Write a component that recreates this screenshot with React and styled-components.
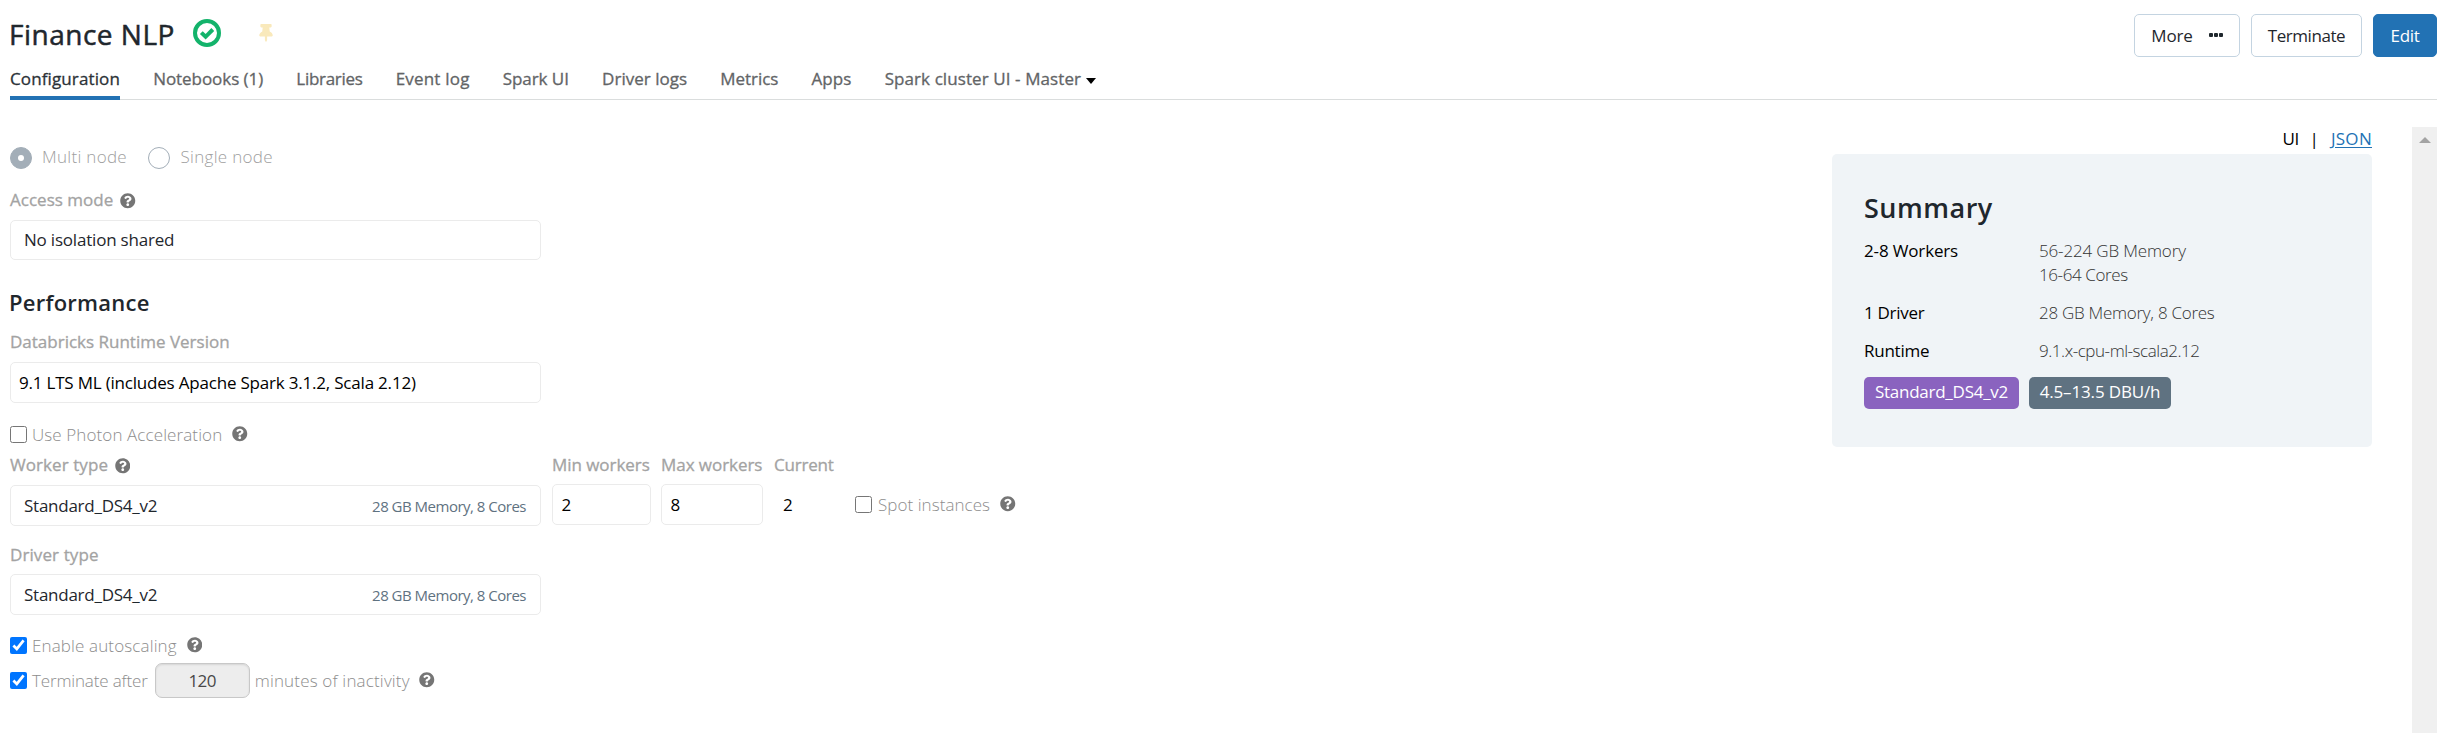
import React from "react";
import styled, { createGlobalStyle, css } from "styled-components";
import { FaQuestionCircle, FaThumbtack } from "react-icons/fa";

const GlobalStyle = createGlobalStyle`
  *, *::before, *::after { box-sizing: border-box; }
  body { margin: 0; background: #fff; overflow: hidden; }
`;

const Page = styled.div`
  height: 733px;
  padding: 14px 11px 0 10px;
  display: flex;
  flex-direction: column;
  font-family: "Open Sans", "Noto Sans", sans-serif;
  font-size: 17px;
  line-height: 24px;
  color: #000;
  white-space: nowrap;
`;

const Text = styled.span`
  letter-spacing: ${(p) => p.$ls || 0}px;
`;

/* Header */
const Header = styled.header`
  display: flex;
  height: 43px;
  align-items: flex-start;
`;
const Title = styled.h1`
  margin: 0 0 0 -1px;
  width: 184px;
  font-size: 28px;
  font-weight: 400;
  line-height: 40px;
  letter-spacing: 0.5px;
  color: #1f272d;
  -webkit-text-stroke: 0.5px;
`;
const StatusIcon = styled.svg`
  width: 28px;
  height: 28px;
  margin-top: 4.5px;
`;
const Pin = styled(FaThumbtack)`
  width: 14px;
  height: 18px;
  margin: 10px 0 0 38px;
  color: #f9e9bb;
`;
const Actions = styled.div`
  display: flex;
  gap: 11px;
  margin-left: auto;
`;
const Button = styled.button`
  display: flex;
  align-items: center;
  justify-content: center;
  gap: 16px;
  width: ${(p) => p.$w}px;
  height: 43px;
  padding: 0;
  border: 1px solid #c4d4e1;
  border-radius: 5px;
  background: #fff;
  color: #1f272d;
  font: inherit;
  line-height: 43px;
  ${(p) =>
    p.$primary &&
    css`
      border-color: #2272b4;
      background: #2272b4;
      color: #fff;
    `}
`;
const Dots = styled.span`
  display: flex;
  gap: 1px;
  margin-top: -1px;
  i {
    width: 4px;
    height: 4px;
    border-radius: 1px;
    background: #1f272d;
  }
`;

/* Tabs */
const Tabs = styled.nav`
  display: flex;
  gap: 33.15px;
  height: 43px;
  flex: none;
  box-shadow: inset 0 -1px #dadddd;
`;
const Tab = styled.a`
  display: flex;
  height: 43px;
  line-height: 43px;
  letter-spacing: ${(p) => p.$ls || 0}px;
  color: ${(p) => (p.$active ? "#2b3237" : "#626466")};
  border-bottom: 4px solid ${(p) => (p.$active ? "#2272b4" : "transparent")};
  -webkit-text-stroke: 0.3px;
`;
const Caret = styled.span`
  width: 0;
  height: 0;
  margin: 21px 0 0 5px;
  border: solid transparent;
  border-width: 6px 5.5px 0;
  border-top-color: #000;
`;

/* Body */
const Body = styled.div`
  display: flex;
  flex: 1;
  margin-top: 27px;
`;
const Form = styled.main`
  flex: 1;
  padding-top: 20px;
`;
const Line = styled.div`
  display: flex;
  align-items: flex-start;
  height: ${(p) => p.$h || 24}px;
  margin-top: ${(p) => p.$mt || 0}px;
`;
const RadioText = styled(Text)`
  margin: 0 ${(p) => p.$mr || 0}px 0 10px;
  line-height: 19px;
  font-weight: 300;
  color: #a0a0a0;
`;
const Radio = styled.span`
  display: flex;
  align-items: center;
  justify-content: center;
  width: 22px;
  height: 22px;
  border-radius: 50%;
  border: 1px solid #a3aeb8;
  background: ${(p) => (p.$on ? "#a3aeb8" : "#fff")};
  &::after {
    content: "";
    width: 6px;
    height: 6px;
    border-radius: 50%;
    background: #fff;
  }
`;
const Label = styled(Text)`
  color: #a3a3a3;
  -webkit-text-stroke: 0.3px;
`;
const Hint = styled(Text)`
  margin-left: ${(p) => p.$ml ?? 5}px;
  line-height: ${(p) => p.$lh || 24}px;
  font-weight: 300;
  color: #8d8d8d;
`;
const HelpIcon = styled(FaQuestionCircle)`
  width: 15.5px;
  height: 15.5px;
  margin: ${(p) => p.$top || 3}px 0 0 ${(p) => p.$left || 7}px;
  color: #757575;
`;
const Check = styled.input`
  width: 17px;
  height: 17px;
  margin: ${(p) => p.$top || 3}px 0 0;
`;
const Field = styled.div`
  display: flex;
  align-items: center;
  justify-content: space-between;
  width: ${(p) => p.$w || 531}px;
  height: ${(p) => p.$h || 41}px;
  margin-top: ${(p) => p.$mt || 8}px;
  padding: 0 14px 0 ${(p) => p.$pl || 13}px;
  border: 1px solid #ebebeb;
  border-radius: 5px;
  color: ${(p) => p.$color || "#1f272d"};
`;
const Spec = styled(Text)`
  font-size: 15px;
  color: #5f7281;
`;
const SectionTitle = styled.h2`
  margin: 27px 0 13px -1px;
  font-size: 22px;
  font-weight: 600;
  line-height: 30px;
  letter-spacing: 0.25px;
  color: #1f272d;
`;
const WorkerRow = styled.div`
  display: flex;
  height: 73px;
  margin-top: 6px;
`;
const Column = styled.div`
  display: flex;
  flex-direction: column;
  margin-left: ${(p) => p.$ml || 0}px;
  width: ${(p) => p.$w || 531}px;
`;
const Current = styled.span`
  margin: 7px 0 0 9px;
  line-height: 41px;
`;
const Minutes = styled.span`
  width: 95px;
  height: 35px;
  margin: 0 5px 0 7px;
  border: 1px solid #c8c8c8;
  border-radius: 7px;
  background: #ededed;
  box-shadow: inset 0 1px 2px rgba(0, 0, 0, 0.1);
  text-align: center;
  line-height: 34px;
  letter-spacing: -0.5px;
  color: #484848;
`;

/* Summary */
const Aside = styled.aside`
  width: 540px;
`;
const ViewSwitch = styled.div`
  display: flex;
  justify-content: flex-end;
  height: 27px;
  gap: 10.5px;
  a {
    margin-left: 1.5px;
    color: #2272b4;
    text-decoration: underline;
    text-underline-offset: 2px;
    letter-spacing: 0.3px;
  }
`;
const Card = styled.section`
  height: 293px;
  padding: 34px 32px 0;
  border-radius: 5px;
  background: #f0f4f7;
`;
const CardTitle = styled.h2`
  margin: 0;
  font-size: 27px;
  font-weight: 600;
  line-height: 39px;
  letter-spacing: 0.5px;
  color: #1f272d;
`;
const Stats = styled.dl`
  display: grid;
  grid-template-columns: 175px 1fr;
  row-gap: 14px;
  margin: 12px 0 14px;
  dt, dd { margin: 0; }
  dd { font-weight: 300; color: #333; }
`;
const Badges = styled.div`
  display: flex;
  gap: 10px;
`;
const Badge = styled.span`
  width: ${(p) => p.$w}px;
  height: 32px;
  border-radius: 5px;
  background: ${(p) => p.$bg};
  color: #fff;
  text-align: center;
  line-height: 29px;
  letter-spacing: ${(p) => p.$ls}px;
`;
const Scrollbar = styled.div`
  width: 25px;
  margin-left: 40px;
  padding-top: 10px;
  background: #f0f0f0;
  &::before {
    content: "";
    display: block;
    width: 0;
    margin: 0 auto;
    border: solid transparent;
    border-width: 0 6px 6px;
    border-bottom-color: #a3a3a3;
  }
`;

const tabs = [
  ["Configuration", 0.12],
  ["Notebooks (1)", -0.05],
  ["Libraries", -0.3],
  ["Event log", 0.2],
  ["Spark UI", -0.05],
  ["Driver logs", 0.02],
  ["Metrics", -0.05],
  ["Apps", 0.1],
  ["Spark cluster UI - Master", 0.09],
];

function NodeType() {
  return (
    <>
      <Text $ls={-0.25}>Standard_DS4_v2</Text>
      <Spec $ls={-0.5}>28 GB Memory, 8 Cores</Spec>
    </>
  );
}

export default function App() {
  return (
    <Page>
      <GlobalStyle />
      <Header>
        <Title>Finance NLP</Title>
        <StatusIcon viewBox="0 0 28 28">
          <circle cx="14" cy="14" r="12" fill="none" stroke="#13b36b" strokeWidth="4" />
          <path d="M8.3 13.6l4.3 4.2 7.2-7.3" fill="none" stroke="#13b36b" strokeWidth="4" />
        </StatusIcon>
        <Pin />
        <Actions>
          <Button $w={106}>
            <Text $ls={-0.15}>More</Text>
            <Dots><i /><i /><i /></Dots>
          </Button>
          <Button $w={111}><Text $ls={-0.45}>Terminate</Text></Button>
          <Button $w={64} $primary><Text $ls={-0.3}>Edit</Text></Button>
        </Actions>
      </Header>
      <Tabs>
        {tabs.map(([name, ls], i) => (
          <Tab key={name} $ls={ls} $active={i === 0}>
            {name}
            {i === tabs.length - 1 && <Caret />}
          </Tab>
        ))}
      </Tabs>
      <Body>
        <Form>
          <Line $h={21}>
            <Radio $on />
            <RadioText $ls={0.3} $mr={21.5}>Multi node</RadioText>
            <Radio />
            <RadioText $ls={0.3}>Single node</RadioText>
          </Line>
          <Line $mt={20}>
            <Label $ls={0.02}>Access mode</Label>
            <HelpIcon $top={5} />
          </Line>
          <Field $h={40}><Text $ls={-0.2}>No isolation shared</Text></Field>
          <SectionTitle>Performance</SectionTitle>
          <Line><Label>Databricks Runtime Version</Label></Line>
          <Field $pl={8} $color="#000">
            <Text $ls={-0.2}>9.1 LTS ML (includes Apache Spark 3.1.2, Scala 2.12)</Text>
          </Field>
          <Line $mt={20}>
            <Check type="checkbox" />
            <Hint $ls={0.1}>Use Photon Acceleration</Hint>
            <HelpIcon $left={10} />
          </Line>
          <WorkerRow>
            <Column>
              <Line>
                <Label $ls={0.07}>Worker type</Label>
                <HelpIcon $top={5} $left={6.5} />
              </Line>
              <Field><NodeType /></Field>
            </Column>
            <Column $ml={11} $w={99}>
              <Label $ls={-0.05}>Min workers</Label>
              <Field $mt={7} $w={99} $pl={8.5} $color="#000">2</Field>
            </Column>
            <Column $ml={10} $w={102}>
              <Label $ls={-0.05}>Max workers</Label>
              <Field $mt={7} $w={102} $pl={8.5} $color="#000">8</Field>
            </Column>
            <Column $ml={11} $w={81}>
              <Label $ls={-0.2}>Current</Label>
              <Current>2</Current>
            </Column>
            <Line $mt={40}>
              <Check type="checkbox" />
              <Hint $ls={0.05} $ml={6}>Spot instances</Hint>
              <HelpIcon $left={10} />
            </Line>
          </WorkerRow>
          <Line $mt={17}><Label $ls={0.1}>Driver type</Label></Line>
          <Field $mt={7}><NodeType /></Field>
          <Line $mt={19}>
            <Check type="checkbox" defaultChecked />
            <Hint $ls={0.13}>Enable autoscaling</Hint>
            <HelpIcon $left={10} />
          </Line>
          <Line $mt={5} $h={35}>
            <Check type="checkbox" defaultChecked $top={9} />
            <Hint $ls={-0.15} $lh={35}>Terminate after</Hint>
            <Minutes>120</Minutes>
            <Hint $ml={0} $ls={0.17} $lh={35}>minutes of inactivity</Hint>
            <HelpIcon $top={9} $left={9.5} />
          </Line>
        </Form>
        <Aside>
          <ViewSwitch>
            <Text $ls={-0.3}>UI</Text>
            <span>|</span>
            <a>JSON</a>
          </ViewSwitch>
          <Card>
            <CardTitle>Summary</CardTitle>
            <Stats>
              <dt><Text $ls={-0.15}>2-8 Workers</Text></dt>
              <dd>
                <Text $ls={-0.15}>56-224 GB Memory</Text>
                <br />
                <Text $ls={-0.4}>16-64 Cores</Text>
              </dd>
              <dt><Text $ls={-0.3}>1 Driver</Text></dt>
              <dd><Text $ls={-0.27}>28 GB Memory, 8 Cores</Text></dd>
              <dt><Text $ls={-0.25}>Runtime</Text></dt>
              <dd><Text $ls={-0.45}>9.1.x-cpu-ml-scala2.12</Text></dd>
            </Stats>
            <Badges>
              <Badge $w={155} $bg="#8a63bf" $ls={-0.25}>Standard_DS4_v2</Badge>
              <Badge $w={142} $bg="#5f7281" $ls={-0.15}>4.5–13.5 DBU/h</Badge>
            </Badges>
          </Card>
        </Aside>
        <Scrollbar />
      </Body>
    </Page>
  );
}
